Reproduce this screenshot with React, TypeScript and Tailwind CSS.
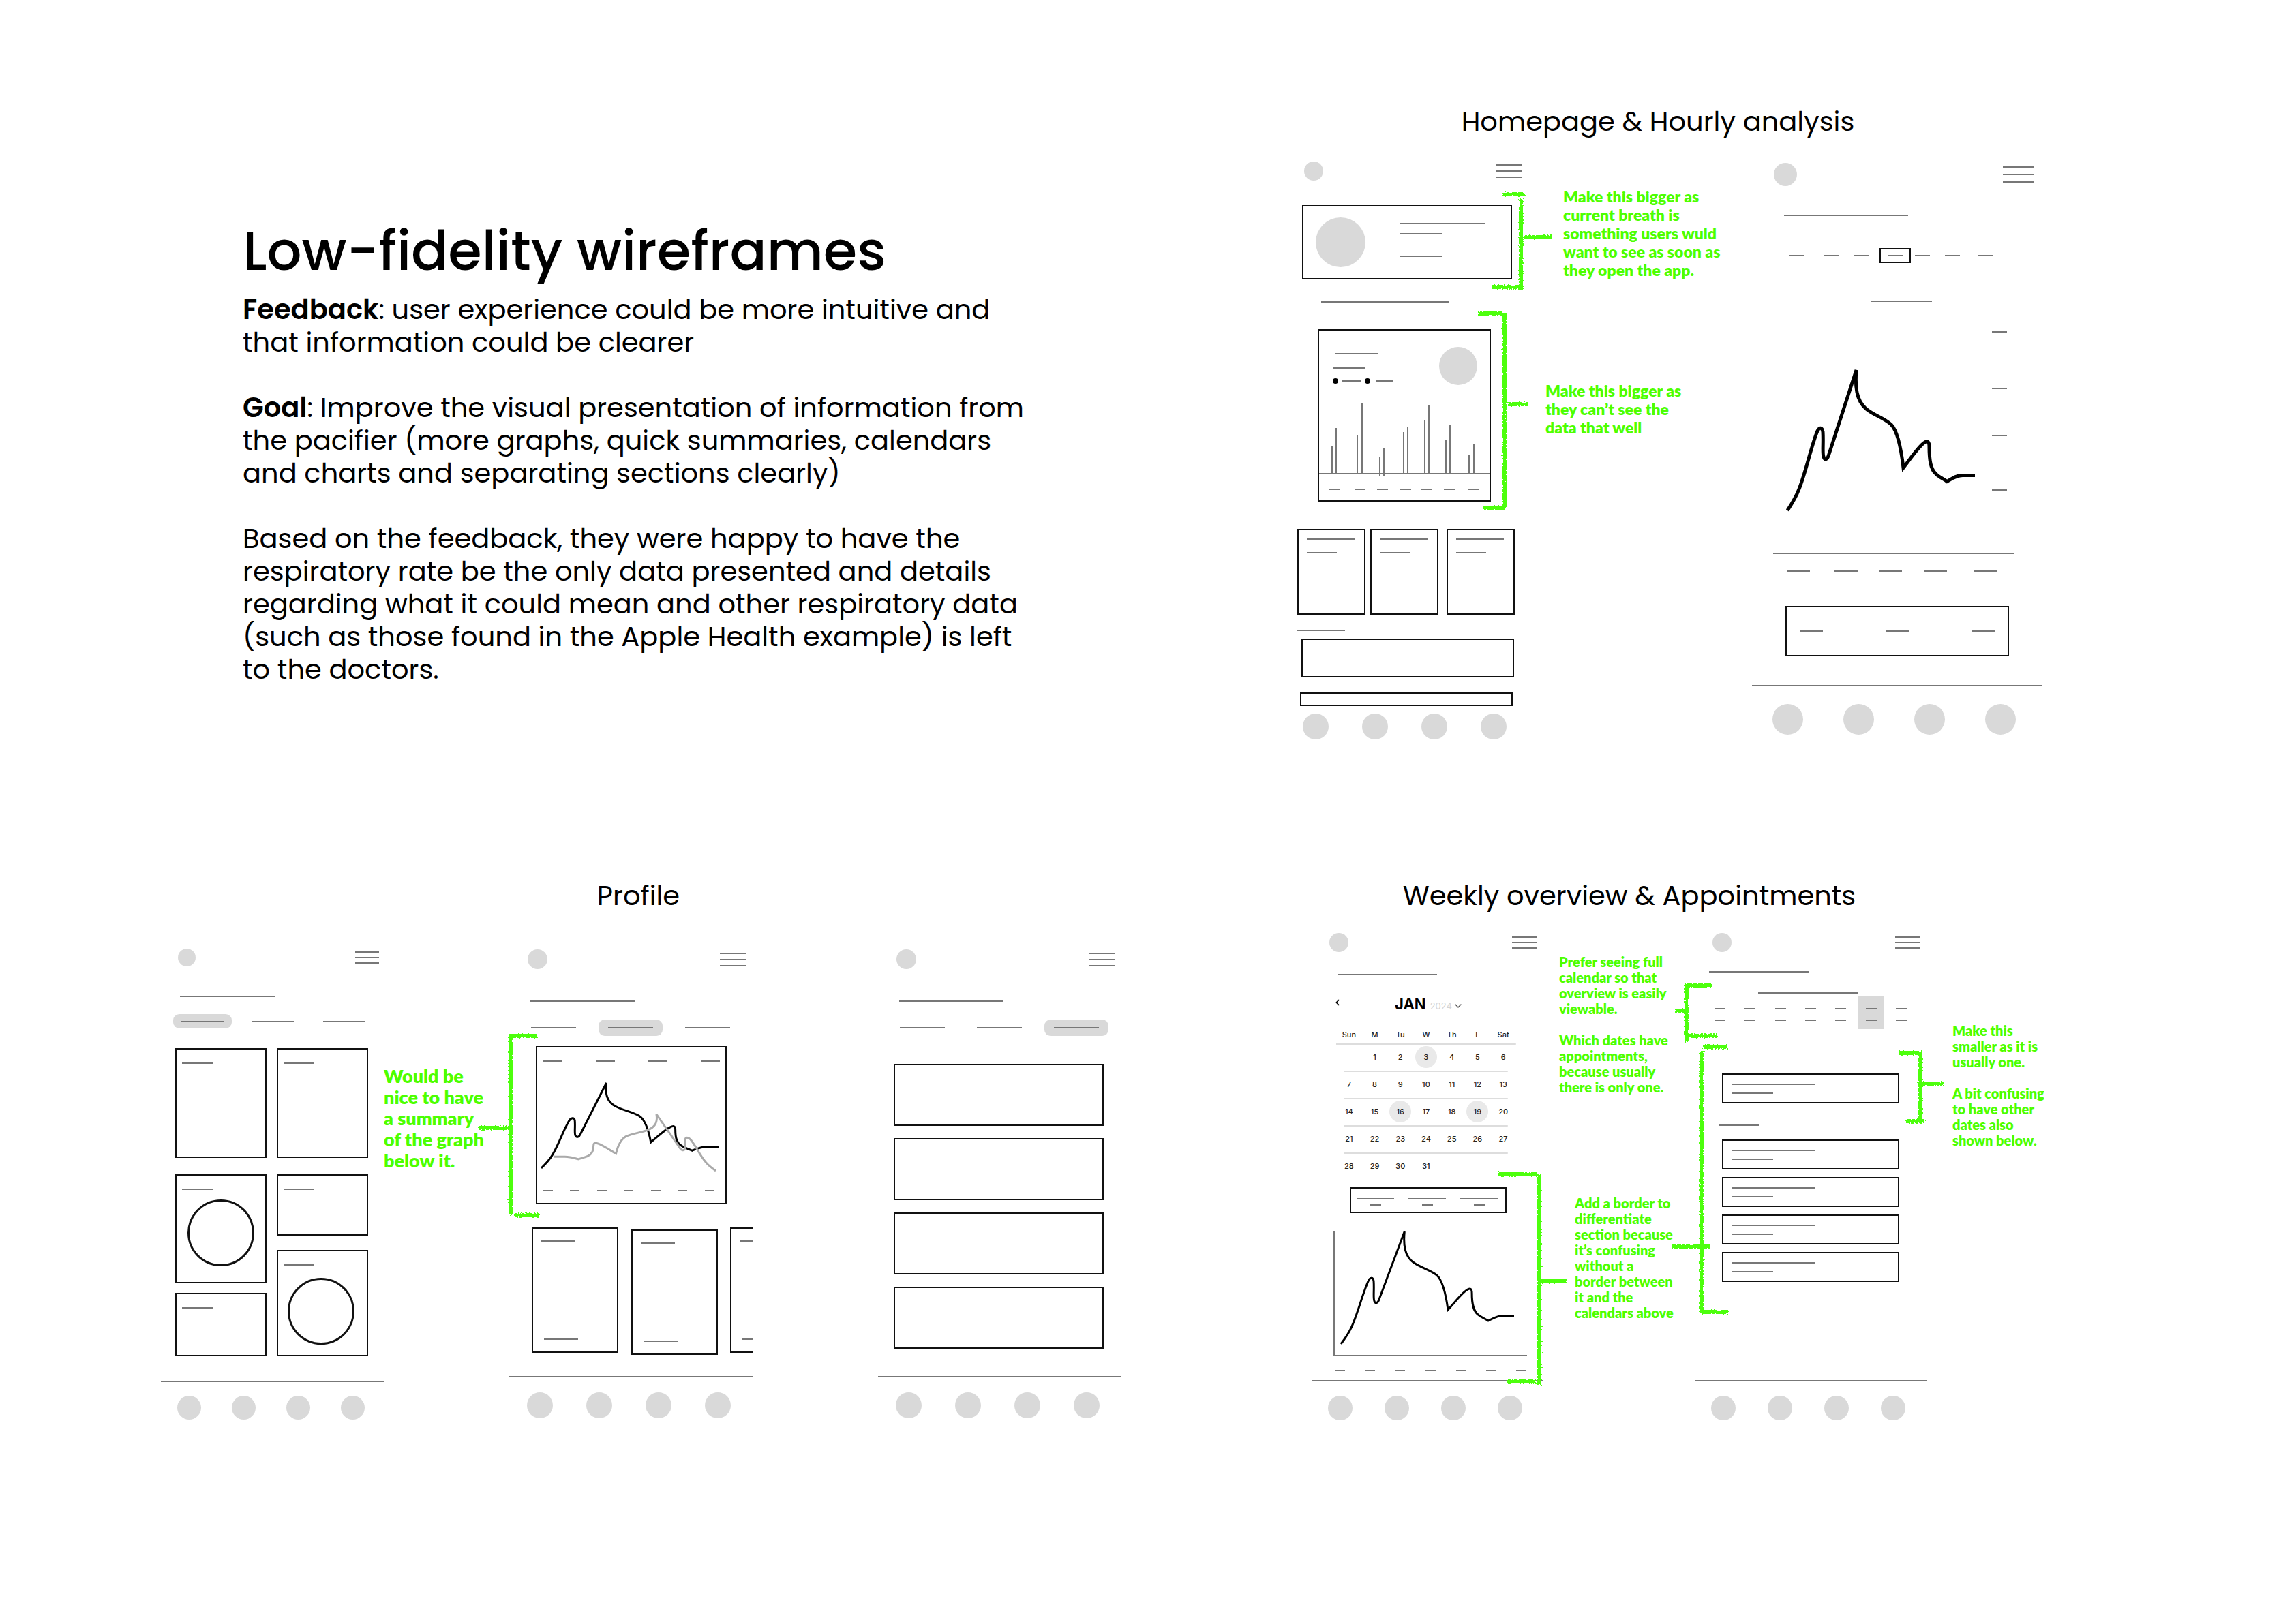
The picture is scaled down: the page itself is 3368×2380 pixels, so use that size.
import { ReactNode } from 'react';
import { ChevronDown, ChevronLeft } from 'lucide-react';

const breathCurve =
  'M0 204C6 195 12 186 17 173C27 148 34 114 43 91C46 83 51 82 52 90C53 106 51 121 53 126C55 133 59 129 61 122L101 0C99 24 101 44 115 56C127 66 141 69 152 79C160 87 166 108 170 142C184 124 192 112 200 106C205 102 208 103 208 112C208 131 210 144 218 151C223 156 229 158 234 162C241 158 247 153 257 153H275';

const weekDays = ['Sun', 'M', 'Tu', 'W', 'Th', 'F', 'Sat'];

const weeks = [
  [null, 1, 2, 3, 4, 5, 6],
  [7, 8, 9, 10, 11, 12, 13],
  [14, 15, 16, 17, 18, 19, 20],
  [21, 22, 23, 24, 25, 26, 27],
  [28, 29, 30, 31, null, null, null]
];

const appointmentDays = [3, 16, 19];

// [x, top, bottom]
const hourlyBars = [
  [19, 63, 103], [25, 36, 103],
  [56, 47, 103], [63, 0, 103],
  [89, 78, 106], [95, 66, 106],
  [124, 42, 104], [130, 34, 104],
  [155, 24, 104], [161, 3, 104],
  [186, 53, 104], [192, 32, 104],
  [220, 75, 104], [227, 59, 104]
];

function Line({ className = '' }: { className?: string }) {
  return <div className={`h-[2px] shrink-0 bg-[#777777] ${className}`} />;
}

function Box({ className = '', children }: { className?: string; children?: ReactNode }) {
  return <div className={`shrink-0 border-2 border-[#111111] ${className}`}>{children}</div>;
}

function Dot({ className = '' }: { className?: string }) {
  return <div className={`shrink-0 rounded-full bg-[#d9d9d9] ${className}`} />;
}

function Header({ className, avatar, menu }: { className: string; avatar: string; menu: string }) {
  return (
    <div className={`flex items-center justify-between ${className}`}>
      <Dot className={avatar} />
      <div className={`flex flex-col ${menu}`}>
        <Line />
        <Line />
        <Line />
      </div>
    </div>
  );
}

function NavDots({ className, dot }: { className: string; dot: string }) {
  return (
    <div className={`flex ${className}`}>
      {[0, 1, 2, 3].map((i) => (
        <Dot key={i} className={dot} />
      ))}
    </div>
  );
}

function Tabs({ active, className, tab, line }: { active: number; className: string; tab: string; line: string }) {
  return (
    <div className={`flex ${className}`}>
      {[0, 1, 2].map((i) => (
        <div
          key={i}
          className={`flex items-center justify-center rounded-[9px] ${tab} ${i === active ? 'bg-[#d9d9d9]' : ''}`}
        >
          <Line className={line} />
        </div>
      ))}
    </div>
  );
}

function Curve({ x, y, width, height, color = '#000000', stroke = 3, flip = false }: {
  x: number;
  y: number;
  width: number;
  height: number;
  color?: string;
  stroke?: number;
  flip?: boolean;
}) {
  return (
    <svg x={x} y={y} width={width} height={height} viewBox="0 0 275 204" preserveAspectRatio="none" overflow="visible">
      <path
        d={breathCurve}
        transform={flip ? 'translate(275 0) scale(-1 1)' : undefined}
        fill="none"
        stroke={color}
        strokeWidth={stroke}
        vectorEffect="non-scaling-stroke"
      />
    </svg>
  );
}

// Hand-drawn marker strokes that tie a note to its part of the screen
function Markers({ id, d }: { id: string; d: string }) {
  return (
    <svg className="pointer-events-none absolute inset-0 h-full w-full" aria-hidden="true">
      <filter id={id} filterUnits="userSpaceOnUse" x="0" y="0" width="100%" height="100%">
        <feTurbulence type="fractalNoise" baseFrequency="0.5" numOctaves="2" seed="4" />
        <feDisplacementMap in="SourceGraphic" scale="6" xChannelSelector="R" yChannelSelector="G" />
      </filter>
      <path d={d} fill="none" stroke="#4dff0a" strokeWidth="6" filter={`url(#${id})`} />
    </svg>
  );
}

function Note({ className, children }: { className: string; children: ReactNode }) {
  return (
    <p className={`font-['Lato','Liberation_Sans',sans-serif] font-extrabold whitespace-pre text-[#4dff00] ${className}`}>
      {children}
    </p>
  );
}

function HomeScreen() {
  return (
    <div className="w-[329px] shrink-0">
      <Header className="pl-[10px]" avatar="size-[28px]" menu="w-[38px] gap-[7px]" />
      <Box className="mt-[36px] ml-[7px] flex h-[109px] w-[308px] items-center pl-[18px]">
        <Dot className="size-[73px]" />
        <div className="ml-[50px] flex h-full flex-col pt-[24px]">
          <Line className="w-[125px]" />
          <Line className="mt-[13px] w-[62px]" />
          <Line className="mt-[31px] w-[62px]" />
        </div>
      </Box>
      <Line className="mt-[32px] ml-[35px] w-[187px]" />
      <Box className="mt-[39px] ml-[30px] h-[253px] w-[254px]">
        <div className="flex justify-between pr-[18px] pl-[20px]">
          <div className="pt-[33px]">
            <Line className="ml-[3px] w-[63px]" />
            <Line className="mt-[19px] w-[48px]" />
            <div className="mt-[14px] flex items-center">
              <div className="size-[8px] rounded-full bg-black" />
              <Line className="ml-[6px] w-[27px]" />
              <div className="ml-[6px] size-[8px] rounded-full bg-black" />
              <Line className="ml-[8px] w-[26px]" />
            </div>
          </div>
          <Dot className="mt-[24px] size-[56px]" />
        </div>
        <svg className="mt-[27px] block" width="250" height="130" fill="none" stroke="#777777" strokeWidth="2">
          {hourlyBars.map(([x, top, bottom]) => (
            <path key={x} d={`M${x} ${top}V${bottom}`} />
          ))}
          <path d="M0 103H250M15 126h16M52 126h16M85 126h16M119 126h16M150 126h16M183 126h16M218 126h16" />
        </svg>
      </Box>
      <div className="mt-[40px] flex">
        {['', 'ml-[7px]', 'ml-[12px]'].map((margin, i) => (
          <Box key={i} className={`h-[126px] w-[100px] pt-[12px] pl-[12px] ${margin}`}>
            <Line className="w-[70px]" />
            <Line className="mt-[18px] w-[44px]" />
          </Box>
        ))}
      </div>
      <Line className="mt-[22px] w-[70px]" />
      <Box className="mt-[11px] ml-[6px] h-[57px] w-[312px]" />
      <Box className="mt-[22px] ml-[4px] h-[20px] w-[312px]" />
      <NavDots className="mt-[11px] ml-[8px] gap-[49px]" dot="size-[38px]" />
    </div>
  );
}

function HourlyScreen() {
  return (
    <div className="w-[425px] shrink-0 pt-[2px]">
      <Header className="pr-[11px] pl-[32px]" avatar="size-[34px]" menu="w-[46px] gap-[9px]" />
      <Line className="mt-[42px] ml-[47px] w-[182px]" />
      <div className="mt-[47px] ml-[55px] flex items-center">
        <Line className="w-[22px]" />
        <Line className="ml-[29px] w-[22px]" />
        <Line className="ml-[22px] w-[22px]" />
        <Box className="ml-[15px] flex h-[22px] w-[46px] items-center justify-center">
          <Line className="w-[22px]" />
        </Box>
        <Line className="ml-[6px] w-[22px]" />
        <Line className="ml-[22px] w-[22px]" />
        <Line className="ml-[26px] w-[22px]" />
      </div>
      <Line className="mt-[55px] ml-[174px] w-[90px]" />
      <svg className="mt-[37px] ml-[31px] block" width="354" height="360">
        <Curve x={21} y={63} width={275} height={206} stroke={5} />
        <path
          d="M321 7h22M321 90h22M321 159h22M321 239h22M0 332H354M21 358h33M90 358h35M156 358h33M222 358h33M295 358h33"
          fill="none"
          stroke="#777777"
          strokeWidth="2"
        />
      </svg>
      <Box className="mt-[49px] ml-[49px] flex h-[74px] w-[328px] items-center justify-between px-[19px]">
        <Line className="w-[34px]" />
        <Line className="w-[34px]" />
        <Line className="w-[34px]" />
      </Box>
      <Line className="mt-[42px]" />
      <NavDots className="mt-[26px] ml-[30px] gap-[59px]" dot="size-[45px]" />
    </div>
  );
}

function ProfileTilesScreen() {
  const tile = 'pt-[19px] pl-[8px]';
  return (
    <div className="w-[327px] shrink-0">
      <Header className="pr-[7px] pl-[25px]" avatar="size-[26px]" menu="w-[35px] gap-[6px]" />
      <Line className="mt-[43px] ml-[28px] w-[140px]" />
      <Tabs active={0} className="mt-[25px] ml-[18px] gap-[18px]" tab="h-[21px] w-[86px]" line="w-[62px]" />
      <div className="mt-[29px] ml-[21px] flex gap-[15px]">
        <div className="w-[134px]">
          <Box className={`h-[161px] ${tile}`}>
            <Line className="w-[45px]" />
          </Box>
          <Box className={`mt-[24px] h-[160px] ${tile}`}>
            <Line className="w-[45px]" />
            <div className="mt-[14px] ml-[8px] size-[98px] rounded-full border-[3px] border-[#111111]" />
          </Box>
          <Box className={`mt-[14px] h-[93px] ${tile}`}>
            <Line className="w-[45px]" />
          </Box>
        </div>
        <div className="w-[134px]">
          <Box className={`h-[161px] ${tile}`}>
            <Line className="w-[45px]" />
          </Box>
          <Box className={`mt-[24px] h-[90px] ${tile}`}>
            <Line className="w-[45px]" />
          </Box>
          <Box className={`mt-[21px] h-[156px] ${tile}`}>
            <Line className="w-[45px]" />
            <div className="mt-[18px] ml-[6px] size-[98px] rounded-full border-[3px] border-[#111111]" />
          </Box>
        </div>
      </div>
      <Line className="mt-[36px]" />
      <NavDots className="mt-[20px] ml-[24px] gap-[45px]" dot="size-[35px]" />
    </div>
  );
}

function ProfileScreen({ active, children }: { active: number; children: ReactNode }) {
  return (
    <div className="w-[357px] shrink-0 pt-[1px]">
      <Header className="pr-[9px] pl-[27px]" avatar="size-[29px]" menu="w-[39px] gap-[7px]" />
      <Line className="mt-[46px] ml-[31px] w-[153px]" />
      <Tabs active={active} className="mt-[26px] ml-[18px] gap-[19px]" tab="h-[24px] w-[94px]" line="w-[66px]" />
      {children}
      <Line />
      <NavDots className="mt-[22px] ml-[26px] gap-[49px]" dot="size-[38px]" />
    </div>
  );
}

function ProfileGraph() {
  return (
    <>
      <Box className="mt-[15px] ml-[39px] h-[232px] w-[280px]">
        <svg className="block" width="276" height="228">
          <path
            d="M9 20h28M86 20h28M163 20h28M240 20h28M9 210h14M48 210h14M88 210h14M127 210h14M167 210h14M206 210h14M246 210h14"
            fill="none"
            stroke="#777777"
            strokeWidth="2"
          />
          <Curve x={6} y={52} width={260} height={125} />
          <Curve x={25} y={98} width={237} height={83} color="#aaaaaa" flip />
        </svg>
      </Box>
      <div className="mt-[34px] mb-[31px] ml-[33px] flex overflow-hidden">
        {['', 'ml-[19px] mt-[3px]', 'ml-[18px]'].map((margin, i) => (
          <Box key={i} className={`flex h-[184px] w-[127px] flex-col justify-between py-[17px] pl-[12px] ${margin}`}>
            <Line className="w-[50px]" />
            <Line className="ml-[4px] w-[50px]" />
          </Box>
        ))}
      </div>
    </>
  );
}

function Calendar() {
  return (
    <div className="mt-[31px] ml-[36px] w-[264px] font-['Inter',sans-serif]">
      <div className="flex h-[24px] items-center">
        <button type="button" aria-label="Previous month" className="w-[86px] pb-[6px] text-black">
          <ChevronLeft className="-ml-[5px] size-[14px]" strokeWidth={3} />
        </button>
        <div className="flex items-baseline">
          <span className="text-[22px] leading-[24px] font-bold text-black">JAN</span>
          <button type="button" className="ml-[6px] flex items-center text-[13px] leading-[24px] text-[#d4d4d4]">
            2024
            <ChevronDown className="ml-[1px] size-[16px] text-[#555555]" strokeWidth={2} />
          </button>
        </div>
      </div>
      <table className="mt-[19px] w-full table-fixed border-collapse text-center text-[11px] leading-[16px] text-[#222222]">
        <thead>
          <tr className="h-[28px] bg-[linear-gradient(#dddddd,#dddddd)] bg-[length:264px_2px] bg-bottom bg-no-repeat">
            {weekDays.map((day) => (
              <th key={day} scope="col" className="p-0 pb-[2px] font-medium">
                {day}
              </th>
            ))}
          </tr>
        </thead>
        <tbody>
          {weeks.map((week, i) => (
            <tr
              key={i}
              className={`h-[40px] ${i < 4 ? 'bg-[linear-gradient(#dddddd,#dddddd)] bg-[length:240px_2px] bg-bottom bg-no-repeat' : ''}`}
            >
              {week.map((day, j) => (
                <td key={j} className="p-0 pb-[4px] font-medium">
                  <div
                    className={`mx-auto flex size-[32px] items-center justify-center rounded-full ${
                      day && appointmentDays.includes(day) ? 'bg-[#e9e9e9]' : ''
                    }`}
                  >
                    {day}
                  </div>
                </td>
              ))}
            </tr>
          ))}
        </tbody>
      </table>
    </div>
  );
}

function WeeklyScreen() {
  return (
    <div className="w-[340px] shrink-0">
      <Header className="pr-[9px] pl-[26px]" avatar="size-[28px]" menu="w-[37px] gap-[6px]" />
      <Line className="mt-[32px] ml-[38px] w-[146px]" />
      <Calendar />
      <Box className="mt-[9px] ml-[56px] flex h-[38px] w-[230px] gap-[21px] pt-[14px] pl-[8px]">
        {[0, 1, 2].map((i) => (
          <div key={i} className="flex flex-col items-center">
            <Line className="w-[55px]" />
            <Line className="mt-[7px] w-[16px]" />
          </div>
        ))}
      </Box>
      <svg className="mt-[20px] ml-[30px] block" width="290" height="214">
        <path
          d="M3 6V189H286M4 211h15M48 211h15M92 211h15M137 211h15M182 211h15M226 211h15M270 211h15"
          fill="none"
          stroke="#777777"
          strokeWidth="2"
        />
        <Curve x={13} y={7} width={254} height={165} />
      </svg>
      <Line className="mt-[11px]" />
      <NavDots className="mt-[21px] ml-[24px] gap-[47px]" dot="size-[36px]" />
    </div>
  );
}

function AppointmentCard() {
  return (
    <Box className="h-[44px] w-[260px] pt-[13px] pl-[12px]">
      <Line className="w-[122px]" />
      <Line className="mt-[11px] w-[61px]" />
    </Box>
  );
}

function AppointmentsScreen() {
  return (
    <div className="w-[340px] shrink-0">
      <Header className="pr-[9px] pl-[26px]" avatar="size-[28px]" menu="w-[37px] gap-[6px]" />
      <Line className="mt-[28px] ml-[21px] w-[146px]" />
      <Line className="mt-[29px] ml-[93px] w-[146px]" />
      <div className="mt-[4px] ml-[18px] flex w-[304px] justify-between">
        {weekDays.map((day, i) => (
          <div key={day} className={`flex h-[48px] w-[38px] flex-col items-center pt-[17px] ${i === 5 ? 'bg-[#d9d9d9]' : ''}`}>
            <Line className="w-[16px]" />
            <Line className="mt-[15px] w-[16px]" />
          </div>
        ))}
      </div>
      <div className="mt-[65px] ml-[40px]">
        <AppointmentCard />
      </div>
      <Line className="mt-[31px] ml-[35px] w-[60px]" />
      <div className="mt-[20px] ml-[40px] flex flex-col gap-[11px]">
        <AppointmentCard />
        <AppointmentCard />
        <AppointmentCard />
        <AppointmentCard />
      </div>
      <Line className="mt-[144px]" />
      <NavDots className="mt-[21px] ml-[24px] gap-[47px]" dot="size-[36px]" />
    </div>
  );
}

export default function App() {
  return (
    <main className="grid min-h-screen grid-cols-2 content-start bg-white font-['Poppins','Inter',sans-serif] text-black">
      <section className="pt-[320px] pl-[356px]">
        <h1 className="text-[80px] leading-[96px] font-medium whitespace-nowrap">Low-fidelity wireframes</h1>
        <div className="mt-[14px] flex flex-col gap-[48px] text-[40px] leading-[48px] whitespace-nowrap">
          <p>
            <strong className="font-semibold">Feedback</strong>: user experience could be more intuitive and
            <br />
            that information could be clearer
          </p>
          <p>
            <strong className="font-semibold">Goal</strong>: Improve the visual presentation of information from
            <br />
            the pacifier (more graphs, quick summaries, calendars
            <br />
            and charts and separating sections clearly)
          </p>
          <p>
            Based on the feedback, they were happy to have the
            <br />
            respiratory rate be the only data presented and details
            <br />
            regarding what it could mean and other respiratory data
            <br />
            (such as those found in the Apple Health example) is left
            <br />
            to the doctors.
          </p>
        </div>
      </section>

      <section className="relative pt-[154px] pb-[105px] pl-[219px]">
        <h2 className="w-[1058px] text-center text-[40px] leading-[48px]">Homepage &amp; Hourly analysis</h2>
        <div className="mt-[35px] flex items-start">
          <HomeScreen />
          <div className="w-[338px] shrink-0 pt-[38px] pl-[35px]">
            <Note className="ml-[26px] text-[23px] leading-[27px]">
              {'Make this bigger as\ncurrent breath is\nsomething users wuld\nwant to see as soon as\nthey open the app.'}
            </Note>
            <Note className="mt-[150px] text-[23px] leading-[27px]">
              {'Make this bigger as\nthey can’t see the\ndata that well'}
            </Note>
          </div>
          <HourlyScreen />
        </div>
        <Markers
          id="home-marker"
          d="M520 285h33M547 292V426M504 421h47M551 348h41M485 460h35M523 460V746M491 745h32M528 593h30"
        />
      </section>

      <section className="relative pt-[100px] pb-[107px] pl-[236px]">
        <h2 className="w-[1401px] text-center text-[40px] leading-[48px]">Profile</h2>
        <div className="mt-[54px] flex items-start">
          <ProfileTilesScreen />
          <Note className="w-[184px] shrink-0 pt-[171px] text-[27px] leading-[31px]">
            {'Would be\nnice to have\na summary\nof the graph\nbelow it.'}
          </Note>
          <ProfileScreen active={1}>
            <ProfileGraph />
          </ProfileScreen>
          <div className="ml-[184px]">
            <ProfileScreen active={2}>
              <div className="mt-[41px] mb-[40px] ml-[23px] flex flex-col gap-[18px]">
                <Box className="h-[91px] w-[308px]" />
                <Box className="h-[91px] w-[308px]" />
                <Box className="h-[91px] w-[308px]" />
                <Box className="h-[91px] w-[308px]" />
              </div>
            </ProfileScreen>
          </div>
        </div>
        <Markers id="profile-marker" d="M747 330H788M749 329V593M754 593H791M702 465H749" />
      </section>

      <section className="relative pt-[100px] pb-[107px] pl-[240px]">
        <h2 className="w-[932px] text-center text-[40px] leading-[48px]">Weekly overview &amp; Appointments</h2>
        <div className="mt-[31px] flex items-start">
          <WeeklyScreen />
          <div className="w-[222px] shrink-0 pt-[31px] pl-[23px]">
            <Note className="text-[20px] leading-[23px]">
              {'Prefer seeing full\ncalendar so that\noverview is easily\nviewable.\n\nWhich dates have\nappointments,\nbecause usually\nthere is only one.'}
            </Note>
            <Note className="mt-[147px] ml-[23px] text-[20px] leading-[23px]">
              {'Add a border to\ndifferentiate\nsection because\nit’s confusing\nwithout a\nborder between\nit and the\ncalendars above'}
            </Note>
          </div>
          <AppointmentsScreen />
          <Note className="ml-[38px] pt-[132px] text-[20px] leading-[23px]">
            {'Make this\nsmaller as it is\nusually one.\n\nA bit confusing\nto have other\ndates also\nshown below.'}
          </Note>
        </div>
        <Markers
          id="weekly-marker"
          d="M513 533h58M574 533V842M577 690h37M527 837h42M790 254V339M790 256h37M792 330h43M773 293h17M814 346h36M812 352V736M813 735h38M769 639h55M1101 355h33M1133 355V457M1112 455h27M1136 400h31"
        />
      </section>
    </main>
  );
}
